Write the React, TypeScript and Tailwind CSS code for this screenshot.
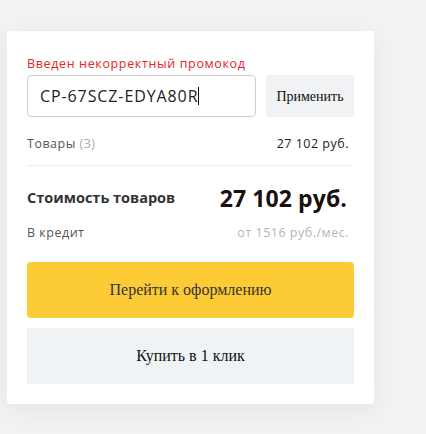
import React from "react";

export default function App() {
  return (
    <div className="w-[426px] h-[434px] bg-[#f2f2f2] pt-[31px] pl-[7px]">
      <div className="w-[367px] bg-white px-[20px] pt-[24px] pb-[20px] shadow-[0_6px_24px_rgba(0,0,0,0.06)] rounded-[2px] font-['Open_Sans',sans-serif]">
        <div className="text-[12.5px] leading-[17px] tracking-[0.64px] text-[#e3262b] mb-[3px]">Введен некорректный промокод</div>
        <div className="flex gap-[10px] h-[42px]">
          <div className="w-[229px] h-[42px] border border-[#cfcfcf] rounded-[4px] flex items-center pl-[12px] text-[16px] tracking-[0.9px] text-[#222]">
            <span>CP-67SCZ-EDYA80R</span>
            <span className="w-[1px] h-[18px] bg-[#111]"></span>
          </div>
          <button className="flex-1 h-[42px] bg-[#f0f2f4] rounded-[2px] text-[14px] text-[#111] font-['Liberation_Serif',serif]">
            Применить
          </button>
        </div>
        <div className="flex justify-between items-center mt-[19px] pr-[5px] h-[17px] text-[12.5px] tracking-[0.5px]">
          <span className="text-[#555]">
            Товары <span className="text-[#aaa]">(3)</span>
          </span>
          <span className="text-[#222]">27 102 руб.</span>
        </div>
        <div className="h-[1px] bg-[#eeeeee] mt-[12px]"></div>
        <div className="flex justify-between items-center mt-[19px] pr-[7px] h-[26px]">
          <span className="text-[14.5px] font-bold text-[#333]">Стоимость товаров</span>
          <span className="text-[23px] font-bold tracking-[0.1px] text-[#1a1010]">27 102 руб.</span>
        </div>
        <div className="flex justify-between items-center mt-[14px] pr-[5px] h-[17px] text-[12.5px] tracking-[0.5px]">
          <span className="text-[#555]">В кредит</span>
          <span className="text-[#b5b5b5]">от 1516 руб./мес.</span>
        </div>
        <button className="mt-[20px] w-full h-[56px] bg-[#fdcb35] rounded-[4px] text-[16px] text-[#333] font-['Liberation_Serif',serif]">
          Перейти к оформлению
        </button>
        <button className="mt-[10px] w-full h-[56px] bg-[#f0f3f5] text-[16px] text-[#111] font-['Liberation_Serif',serif]">
          Купить в 1 клик
        </button>
      </div>
    </div>
  );
}
